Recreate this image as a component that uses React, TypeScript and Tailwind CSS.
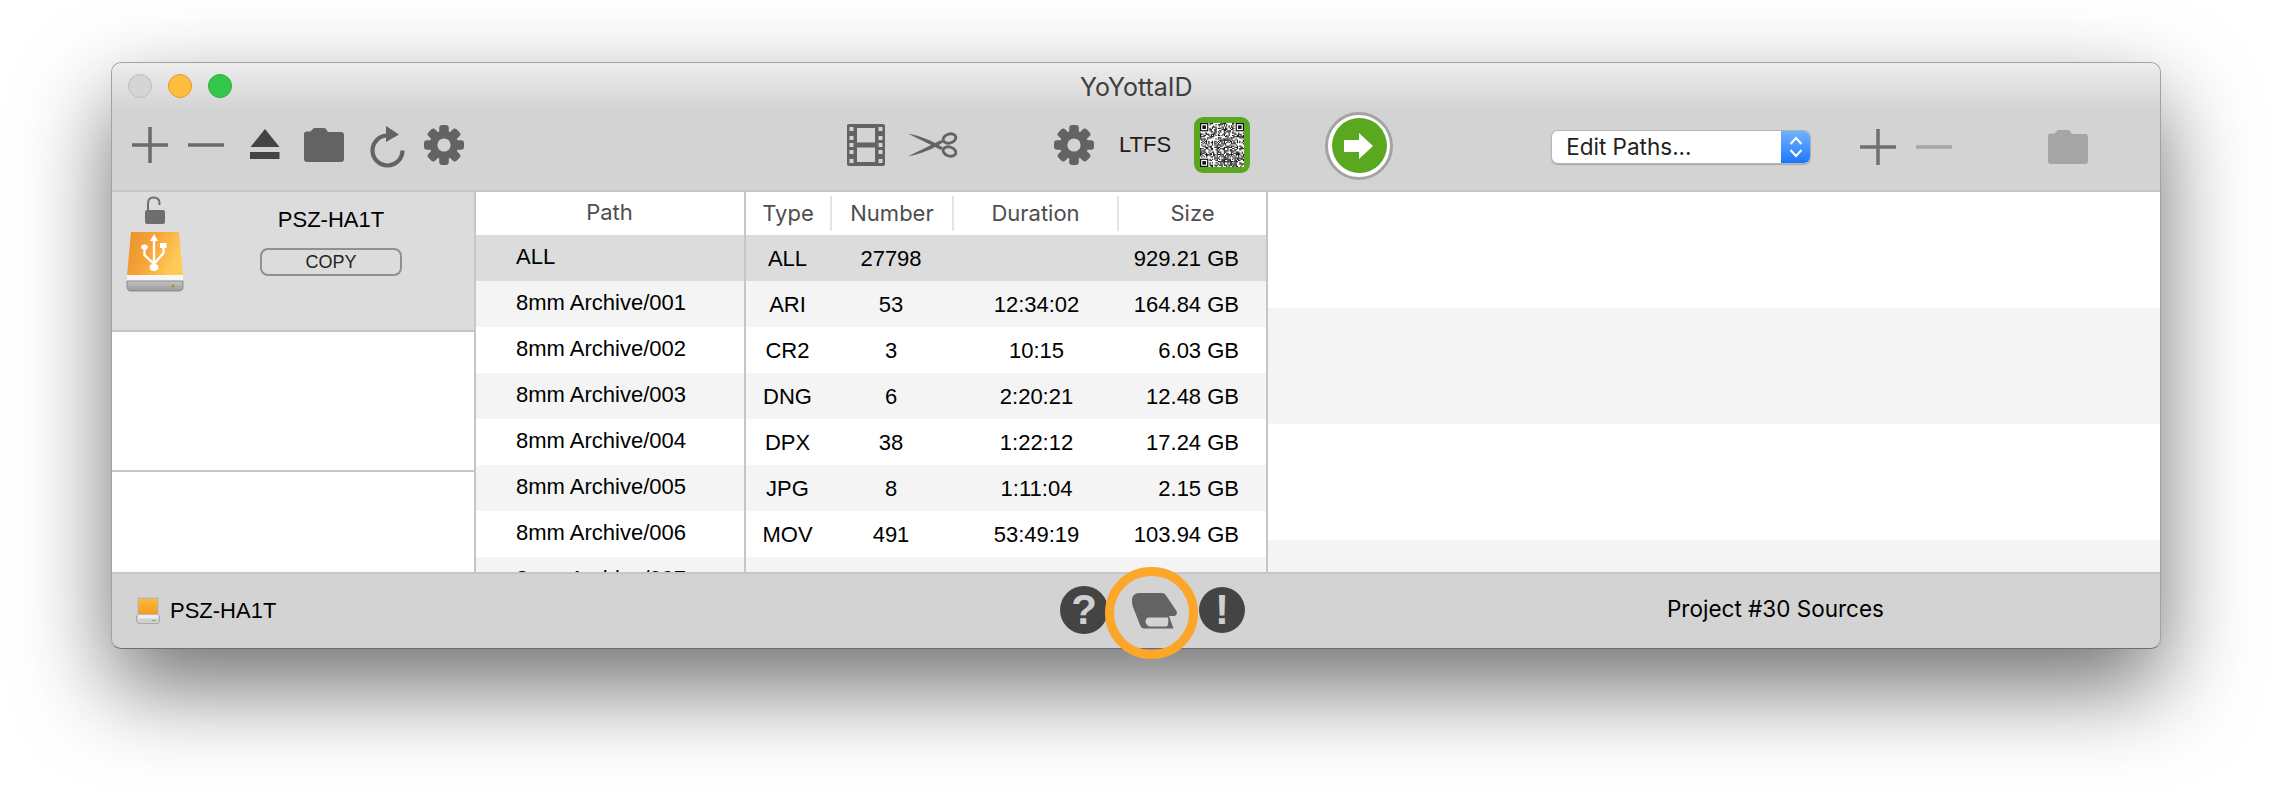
import React from "react";

const sans = "font-['Liberation_Sans',Arial,sans-serif]";
const ui = "font-['Inter','Liberation_Sans',sans-serif]";

function Plus({ color = "#6b6b6b" }: { color?: string }) {
  return (
    <svg width="36" height="36" viewBox="0 0 36 36" className="block shrink-0">
      <path d="M0 18H36M18 0V36" stroke={color} strokeWidth="3.5" fill="none" />
    </svg>
  );
}
function Minus({ color = "#6b6b6b" }: { color?: string }) {
  return (
    <svg width="36" height="36" viewBox="0 0 36 36" className="block shrink-0">
      <path d="M0 18H36" stroke={color} strokeWidth="3.5" fill="none" />
    </svg>
  );
}
function Folder({ color = "#636363" }: { color?: string }) {
  return (
    <svg width="40" height="34" viewBox="0 0 40 34" className="block shrink-0">
      <path
        d="M0 6C0 4.500 1 3.500 2.500 3.500H6.500L9 .8C9.400 .3 10 0 10.800 0H20C20.800 0 21.400 .3 21.800 .8L24 4H37C38.800 4 40 5.200 40 7V31C40 32.800 38.800 34 37 34H3C1.200 34 0 32.800 0 31Z"
        fill={color}
      />
    </svg>
  );
}
function Gear({ size = 40 }: { size?: number }) {
  return (
    <svg width={size} height={size} viewBox="0 0 40 40" className="block shrink-0">
      {[0, 45, 90, 135, 180, 225, 270, 315].map((a) => (
        <rect key={a} x="15.2" y="0" width="9.6" height="14" rx="3" fill="#636363" transform={`rotate(${a} 20 20)`} />
      ))}
      <circle cx="20" cy="20" r="14.2" fill="#636363" />
      <circle cx="20" cy="20" r="6.6" fill="#d3d3d3" />
    </svg>
  );
}
function Qr() {
  const n = 37;
  const cells: React.ReactNode[] = [];
  const inFinder = (x: number, y: number) =>
    (x < 8 && y < 8) || (x >= n - 8 && y < 8) || (x < 8 && y >= n - 8);
  for (let y = 0; y < n; y++) {
    for (let x = 0; x < n; x++) {
      if (inFinder(x, y)) continue;
      const h = (x * 7919 + y * 104729 + x * y * 31 + ((x ^ y) * 17)) % 97;
      if (h % 2 === 0) cells.push(<rect key={`${x}-${y}`} x={x} y={y} width="1" height="1" fill="#111" />);
    }
  }
  const finder = (x: number, y: number) => (
    <g key={`f${x}${y}`}>
      <rect x={x} y={y} width="7" height="7" fill="#111" />
      <rect x={x + 1} y={y + 1} width="5" height="5" fill="#fff" />
      <rect x={x + 2} y={y + 2} width="3" height="3" fill="#111" />
    </g>
  );
  return (
    <div className="ml-[23px] flex h-[56px] w-[56px] shrink-0 items-center justify-center rounded-[9px] bg-[#5aa621]">
      <svg width="44" height="44" viewBox="0 0 37 37" className="block bg-white">
        {cells}
        {finder(0, 0)}
        {finder(n - 7, 0)}
        {finder(0, n - 7)}
      </svg>
    </div>
  );
}
function Drive() {
  return (
    <svg width="58" height="62" viewBox="0 0 58 62" className="block">
      <defs>
        <linearGradient id="org" x1="0" y1="0" x2="1" y2="0.35">
          <stop offset="0" stopColor="#e8922a" />
          <stop offset="0.5" stopColor="#f8a43a" />
          <stop offset="1" stopColor="#fecb58" />
        </linearGradient>
        <linearGradient id="base" x1="0" y1="0" x2="0" y2="1">
          <stop offset="0" stopColor="#c4c4c4" />
          <stop offset="1" stopColor="#9a9a9a" />
        </linearGradient>
      </defs>
      <path d="M5 1H53L57 44H1Z" fill="url(#org)" />
      <rect x="1" y="44" width="56" height="6" fill="#f6f6f6" />
      <path d="M1 50H57V56C57 58.500 55.500 60 53 60H5C2.500 60 1 58.500 1 56Z" fill="url(#base)" stroke="#8b8b8b" strokeWidth="1" />
      <circle cx="47" cy="55" r="1.5" fill="#9a9a20" />
      <g fill="#fff" stroke="#fff">
        <path d="M28 33V8M28 33L18.500 24V17M28 33L37.500 22V15" fill="none" strokeWidth="2.4" />
        <path d="M28 3L32 10H24Z" strokeWidth="0" />
        <ellipse cx="28" cy="36.5" rx="4.5" ry="3.4" strokeWidth="0" />
        <ellipse cx="18.5" cy="16" rx="3.4" ry="2.6" strokeWidth="0" />
        <rect x="34" y="12" width="6.5" height="5" strokeWidth="0" />
      </g>
    </svg>
  );
}
function SmallDrive() {
  return (
    <svg width="24" height="27" viewBox="0 0 24 27" className="block shrink-0">
      <defs>
        <linearGradient id="sorg" x1="0" y1="0" x2="0" y2="1">
          <stop offset="0" stopColor="#ffb935" />
          <stop offset="1" stopColor="#ef9c23" />
        </linearGradient>
      </defs>
      <path d="M1.500 2C1.500 1 2 .5 3 .5H21C22 .5 22.500 1 22.500 2V20H1.500Z" fill="#b8b8b8" />
      <rect x="2.500" y="2" width="19" height="15" fill="url(#sorg)" />
      <path d="M.5 19H23.500V24C23.500 25.500 22.500 26.500 21 26.500H3C1.500 26.500 .5 25.500 .5 24Z" fill="#cfcfcf" stroke="#a9a9a9" />
      <rect x="2" y="18" width="20" height="3.500" fill="#ededed" />
      <rect x="16" y="23" width="4" height="1" fill="#5fbf5f" />
    </svg>
  );
}

const rows = [
  ["ALL", "ALL", "27798", "", "929.21 GB"],
  ["8mm Archive/001", "ARI", "53", "12:34:02", "164.84 GB"],
  ["8mm Archive/002", "CR2", "3", "10:15", "6.03 GB"],
  ["8mm Archive/003", "DNG", "6", "2:20:21", "12.48 GB"],
  ["8mm Archive/004", "DPX", "38", "1:22:12", "17.24 GB"],
  ["8mm Archive/005", "JPG", "8", "1:11:04", "2.15 GB"],
  ["8mm Archive/006", "MOV", "491", "53:49:19", "103.94 GB"],
  ["8mm Archive/007", "MXF", "", "", "GB"],
];
const rowBg = (i: number) => (i === 0 ? "bg-[#dcdcdc]" : i % 2 === 1 ? "bg-[#f4f4f4]" : "bg-white");

function HeaderCell({ label, divider = true }: { label: string; divider?: boolean }) {
  return (
    <div className={`flex h-[35px] items-center justify-center ${divider ? "border-r-2 border-[#e4e4e4]" : ""}`}>
      <span className={`${ui} text-[22px] text-[#4e4e4e]`}>{label}</span>
    </div>
  );
}

export default function App() {
  return (
    <div className="h-[808px] w-[2272px] overflow-hidden bg-white pl-[111px] pt-[62px]">
      <div className="flex h-[587px] w-[2050px] flex-col rounded-[10px] border border-[#a2a2a2] border-b-[#6e6e6e] bg-[#d3d3d3] shadow-[0_38px_90px_0_rgba(0,0,0,0.56)]">
        {/* Title bar */}
        <div className="flex h-[48px] shrink-0 items-start rounded-t-[9px] bg-gradient-to-b from-[#ededed] to-[#d3d3d3] pl-[16px] pt-[11px]">
          <div className="h-[24px] w-[24px] rounded-full border border-[#bcbcbc] bg-[#d5d5d5]" />
          <div className="ml-[16px] h-[24px] w-[24px] rounded-full border border-[#e09b2a] bg-[#ffbd3d]" />
          <div className="ml-[16px] h-[24px] w-[24px] rounded-full border border-[#2aad3d] bg-[#33c84a]" />
          <div className={`${ui} ml-[848px] mt-[1px] text-[25px] leading-[25px] text-[#3e3e3e]`}>YoYottaID</div>
        </div>

        {/* Toolbar */}
        <div className="flex h-[81px] shrink-0 items-center border-b-2 border-[#c6c6c6] pb-[12px] pl-[20px]">
          <Plus />
          <div className="ml-[20px]"><Minus /></div>
          <svg width="30" height="31" viewBox="0 0 30 31" className="ml-[26px] block shrink-0">
            <path d="M15 0L29.500 18H.5Z" fill="#444" />
            <rect x="0" y="23" width="29.500" height="7" fill="#444" />
          </svg>
          <div className="ml-[24px]"><Folder /></div>
          <svg width="38" height="42" viewBox="0 0 38 42" className="ml-[24px] mt-[5px] block shrink-0">
            <path d="M19.500 9.500A15 15 0 1 0 34.500 24.500" fill="none" stroke="#636363" strokeWidth="4.200" />
            <path d="M18 0L31 8.500L18 16Z" fill="#636363" />
          </svg>
          <div className="ml-[18px]"><Gear /></div>

          <svg width="38" height="42" viewBox="0 0 38 42" className="ml-[383px] block shrink-0">
            <path
              fillRule="evenodd"
              fill="#636363"
              d="M2 0H36C37.200 0 38 .8 38 2V40C38 41.200 37.200 42 36 42H2C.8 42 0 41.200 0 40V2C0 .8 .8 0 2 0ZM2.500 3V7H6.500V3ZM2.500 12V16H6.500V12ZM2.500 19V23H6.500V19ZM2.500 26V30H6.500V26ZM2.500 35V39H6.500V35ZM31.500 3V7H35.500V3ZM31.500 12V16H35.500V12ZM31.500 19V23H35.500V19ZM31.500 26V30H35.500V26ZM31.500 35V39H35.500V35ZM10 4V18.500H28V4ZM10 23.500V38H28V23.500Z"
            />
          </svg>
          <svg width="50" height="26" viewBox="0 0 50 26" className="ml-[23px] block shrink-0">
            <path d="M0 1.500C12 4 25 9 35 15.500L33 18C22 12 10 7 0 1.500Z" fill="#636363" />
            <path d="M0 24.500C12 22 25 17 35 10.500L33 8C22 14 10 19 0 24.500Z" fill="#636363" />
            <ellipse cx="41.500" cy="6.500" rx="6.500" ry="4.500" fill="none" stroke="#636363" strokeWidth="2.800" transform="rotate(-18 41.500 6.500)" />
            <ellipse cx="41.500" cy="19.500" rx="6.500" ry="4.500" fill="none" stroke="#636363" strokeWidth="2.800" transform="rotate(18 41.500 19.500)" />
          </svg>
          <div className="ml-[96px]"><Gear /></div>
          <span className={`${sans} ml-[25px] text-[22px] text-[#1c1c1c]`}>LTFS</span>
          <Qr />
          <div className="ml-[75px] mt-[2px] flex h-[68px] w-[68px] shrink-0 items-center justify-center rounded-full border-[3px] border-[#a3a3a3] bg-white">
            <div className="flex h-[55px] w-[55px] items-center justify-center rounded-full bg-[#59a81f]">
              <svg width="30" height="26" viewBox="0 0 30 26" className="block">
                <path d="M0 7H15V0L29 13L15 26V19H0Z" fill="#fff" />
              </svg>
            </div>
          </div>
          <div className="ml-[158px] mt-[4px] flex h-[34px] w-[260px] shrink-0 overflow-hidden rounded-[7px] border border-[#b3b3b3] bg-white shadow-[0_1px_1px_rgba(0,0,0,0.2)]">
            <span className={`${ui} flex-1 pl-[14px] text-[22.500px] leading-[31px] text-[#222]`}>Edit Paths...</span>
            <div className="flex w-[29px] items-center justify-center bg-gradient-to-b from-[#70b2ff] to-[#1676fd]">
              <svg width="14" height="24" viewBox="0 0 14 24" className="block">
                <path d="M1.500 9L7 3L12.500 9M1.500 15L7 21L12.500 15" fill="none" stroke="#fff" strokeWidth="2" />
              </svg>
            </div>
          </div>
          <div className="ml-[49px] mt-[4px]"><Plus color="#6f6f6f" /></div>
          <div className="ml-[20px] mt-[4px]"><Minus color="#a6a6a6" /></div>
          <div className="ml-[96px] mt-[4px]"><Folder color="#a5a5a5" /></div>
        </div>

        {/* Content */}
        <div className="flex h-[380px] shrink-0 overflow-hidden">
          {/* Sources */}
          <div className="flex w-[364px] shrink-0 flex-col border-r-2 border-[#c6c6c6] bg-white">
            <div className="flex h-[140px] shrink-0 border-b-2 border-[#c6c6c6] bg-[#dcdcdc]">
              <div className="flex w-[84px] shrink-0 flex-col items-center pl-[2px] pt-[4px]">
                <svg width="20" height="28" viewBox="0 0 20 28" className="block">
                  <path d="M3 15V7.500C3 3.500 5.500 1.500 8.500 1.500C12 1.500 14.500 3.500 14.500 7V9" fill="none" stroke="#6e6e6e" strokeWidth="2" />
                  <rect x="0" y="14" width="20" height="14" rx="2" fill="#6e6e6e" />
                </svg>
                <div className="mt-[7px]"><Drive /></div>
              </div>
              <div className="ml-[64px] flex w-[142px] shrink-0 flex-col items-center pt-[15px]">
                <span className={`${sans} text-[22px] leading-[26px] text-black`}>PSZ-HA1T</span>
                <div className={`${sans} mt-[15px] flex h-[28px] w-[142px] items-center justify-center rounded-[8px] border-2 border-[#909090] text-[18px] text-[#222]`}>COPY</div>
              </div>
            </div>
            <div className="h-[140px] shrink-0 border-b-2 border-[#c6c6c6]" />
            <div className="flex-1" />
          </div>

          {/* Path */}
          <div className="flex w-[270px] shrink-0 flex-col border-r-2 border-[#c6c6c6] bg-white">
            <div className="flex h-[43px] shrink-0 items-start justify-center pt-[5px]">
              <span className={`${ui} pr-[1px] text-[22px] leading-[30px] text-[#4e4e4e]`}>Path</span>
            </div>
            {rows.map((r, i) => (
              <div key={i} className={`${sans} ${rowBg(i)} h-[46px] shrink-0 pl-[40px] pt-[8.500px] text-[22px] leading-[26px] text-black`}>{r[0]}</div>
            ))}
          </div>

          {/* Stats */}
          <div className="flex w-[522px] shrink-0 flex-col border-r-2 border-[#c6c6c6] bg-white">
            <div className="grid h-[43px] shrink-0 grid-cols-[86px_122px_165px_147px] pt-[4px]">
              <HeaderCell label="Type" />
              <HeaderCell label="Number" />
              <HeaderCell label="Duration" />
              <HeaderCell label="Size" divider={false} />
            </div>
            {rows.map((r, i) => (
              <div key={i} className={`${sans} ${rowBg(i)} grid h-[46px] shrink-0 grid-cols-[86px_122px_165px_147px] items-center pt-[1px] text-[22px] leading-[26px] text-black`}>
                <div className="pr-[3px] text-center">{r[1]}</div>
                <div className="pr-[4px] text-center">{r[2]}</div>
                <div className="text-center">{r[3]}</div>
                <div className="pr-[27px] text-right">{r[4]}</div>
              </div>
            ))}
          </div>

          {/* Destination stripes */}
          <div className="flex min-w-0 flex-1 flex-col">
            <div className="h-[116px] shrink-0 bg-white" />
            <div className="h-[116px] shrink-0 bg-[#f4f4f4]" />
            <div className="h-[116px] shrink-0 bg-white" />
            <div className="h-[32px] shrink-0 bg-[#f4f4f4]" />
          </div>
        </div>

        {/* Footer */}
        <div className="relative flex h-[76px] shrink-0 items-center rounded-b-[9px] border-t-2 border-[#c6c6c6] pb-[2px] pl-[24px]">
          <SmallDrive />
          <span className={`${sans} ml-[10px] w-[110px] shrink-0 whitespace-nowrap text-[22px] text-black`}>PSZ-HA1T</span>
          <div className="ml-[780px] flex h-[48px] w-[48px] shrink-0 items-center justify-center rounded-full bg-[#444]">
            <span className={`${sans} text-[42px] font-bold leading-none text-[#d0d0d0]`}>?</span>
          </div>
          <svg width="46" height="38" viewBox="0 0 46 38" className="ml-[24px] mt-[4px] block shrink-0">
            <path
              fill="#636363"
              d="M0 7C0 3 3 0 7 0H30C32 0 33 1 34 2.500L44.500 18C45.500 20 44.500 23 42 23H37L41.500 35.500H13C10 36 9 34 8 32L1 14C.3 12 0 10 0 7Z"
            />
            <path
              fill="#d3d3d3"
              d="M17 24.500H36C36.500 28 36.500 31 35 33.500H17C14.500 32 13.500 30 13.500 28.500C13.500 26 15 24.500 17 24.500Z"
            />
          </svg>
          <div className="ml-[21px] flex h-[46px] w-[46px] shrink-0 items-center justify-center rounded-full bg-[#444]">
            <span className={`${sans} text-[42px] font-bold leading-none text-[#d0d0d0]`}>!</span>
          </div>
          <span className={`${ui} ml-[422px] mb-[2px] text-[22.500px] text-black`}>Project #30 Sources</span>
          <div className="absolute left-[993px] top-[-7px] h-[92px] w-[93px] rounded-full border-[9px] border-[#fca62a]" />
        </div>
      </div>
    </div>
  );
}
